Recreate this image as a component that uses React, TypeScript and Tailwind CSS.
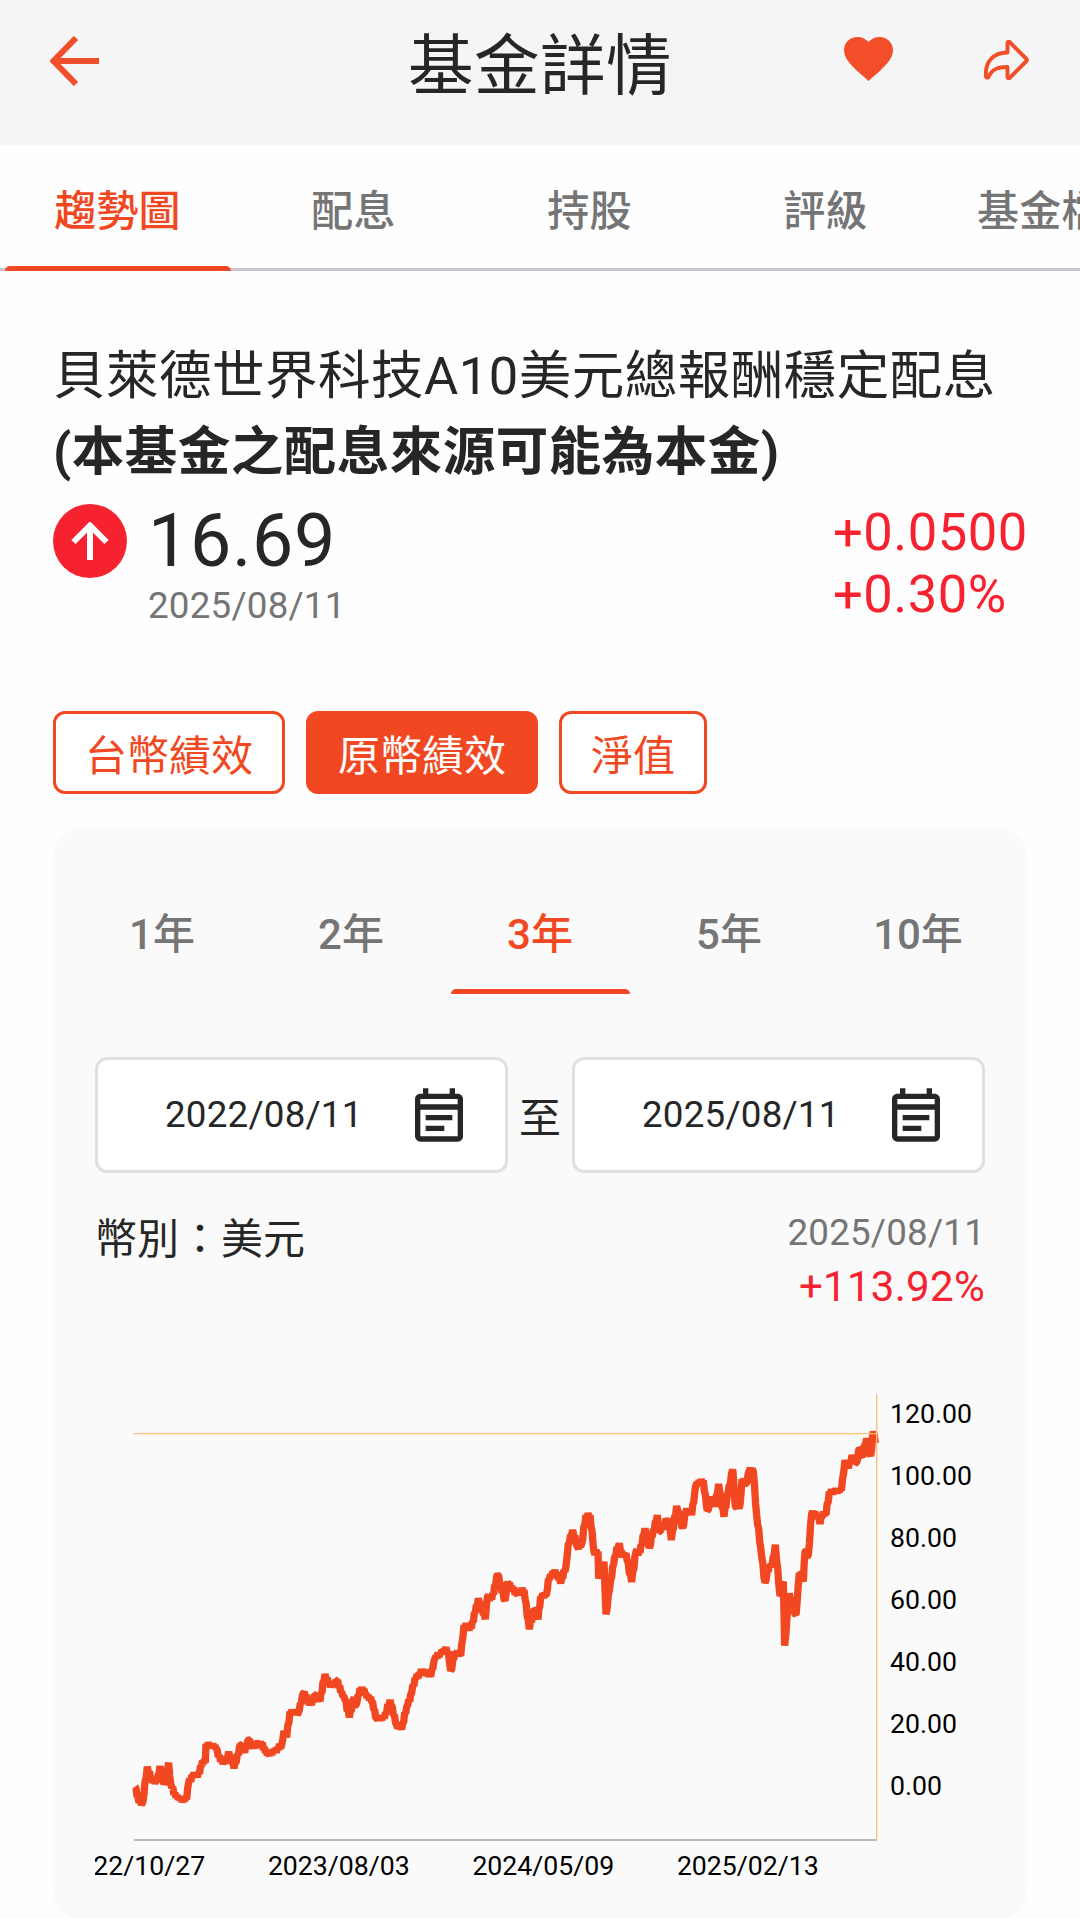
import { useState } from 'react'

const TABS = ['趨勢圖', '配息', '持股', '評級', '基金檔案']
const MODES = ['台幣績效', '原幣績效', '淨值']
const PERIODS = ['1年', '2年', '3年', '5年', '10年']

const Y_LABELS = ['120.00', '100.00', '80.00', '60.00', '40.00', '20.00', '0.00']
const X_LABELS = ['2022/10/27', '2023/08/03', '2024/05/09', '2025/02/13']

// x,y pairs in chart units (3 units per pixel)
const SERIES =
  '45,1220 57,1268 68,1268 82,1160 98,1208 112,1205 120,1158 132,1212 146,1148 152,1210 168,1252 175,1258 200,1258 206,1208 222,1178 232,1192 248,1142 256,1148 258,1092 272,1094 288,1105 302,1145 316,1150 326,1115 342,1165 362,1095 374,1118 386,1080 400,1105 412,1090 424,1092 442,1125 462,1115 485,1095 492,1052 500,1072 510,995 535,998 550,940 574,975 586,945 600,964 615,882 632,922 650,902 668,948 675,960 688,1012 700,958 708,975 720,925 738,940 755,965 770,1015 793,1015 810,960 830,1035 845,1048 860,980 875,940 885,895 910,870 932,890 945,835 960,820 ' +
  '975,810 985,815 992,872 1005,815 1022,828 1032,735 1054,745 1075,655 1096,718 1102,652 1115,658 1133,585 1155,662 1162,605 1188,640 1212,630 1228,748 1242,690 1254,718 1262,650 1280,640 1285,598 1305,570 1322,610 ' +
  '1338,558 1345,490 1358,450 1372,500 1385,492 1398,405 1410,405 1422,515 1434,515 1436,596 1452,545 1458,703 1472,600 1484,530 1498,490 1508,532 1518,520 1535,606 1548,515 1560,518 1575,445 1588,502 1612,405 1618,455 1645,415 1654,480 1670,378 1688,443 1700,385 1715,405 1728,315 ' +
  '1750,302 1762,392 1775,350 1785,380 1796,312 1812,410 1824,340 1838,268 1846,380 1860,375 1866,298 1878,310 1888,272 1900,275 1910,405 1922,502 1935,608 1948,555 1956,560 1966,494 1980,648 1990,605 1994,797 2008,640 2028,705 2038,580 2050,605 2055,515 2065,525 2075,402 2090,400 2100,432 2110,395 2118,405 2128,335 2164,332 2175,240 2185,265 2196,225 2210,248 2218,205 2228,228 2240,175 2252,228 2260,155 2266,190'

const WOBBLE = [7, -8, 4, -6, 9, -5, 6, -9]

// fill in daily points between the turning points
function toDaily(series: string) {
  const points = series.split(' ').map((pair) => pair.split(',').map(Number))
  const daily: string[] = []

  points.forEach(([x, y], i) => {
    daily.push(`${x},${y}`)
    const next = points[i + 1]
    if (!next) {
      return
    }
    const steps = Math.max(1, Math.round((next[0] - x) / 3.2))
    for (let s = 1; s < steps; s++) {
      const px = x + ((next[0] - x) * s) / steps
      const py = y + ((next[1] - y) * s) / steps + WOBBLE[daily.length % WOBBLE.length]
      daily.push(`${px.toFixed(1)},${py.toFixed(1)}`)
    }
  })

  return daily.join(' ')
}

const DAILY = toDaily(SERIES)

function BackIcon() {
  return (
    <svg viewBox="0 0 49 50" className="h-[50px] w-[49px]" fill="none" stroke="#f24e29" strokeWidth="6">
      <path d="M49 25H4M26 2 3.500 25 26 48" />
    </svg>
  )
}

function HeartIcon() {
  return (
    <svg viewBox="2 3 20 18.350" preserveAspectRatio="none" className="h-[44px] w-[49px]" fill="#f24e29">
      <path d="M12 21.350 10.550 20.030C5.400 15.360 2 12.280 2 8.500 2 5.420 4.420 3 7.500 3c1.740 0 3.410.81 4.500 2.090C13.090 3.810 14.760 3 16.500 3 19.580 3 22 5.420 22 8.500c0 3.780-3.400 6.860-8.550 11.540L12 21.350z" />
    </svg>
  )
}

function ShareIcon() {
  return (
    <svg
      viewBox="0 0 45 40"
      className="h-[40px] w-[45px]"
      fill="none"
      stroke="#f24e29"
      strokeWidth="3.900"
      strokeLinejoin="round"
    >
      <path d="M23.500 3.200c0-1.500 1.200-2 2.200-1L42.500 19 43 20l-.5 1L25.700 37.800c-1 1-2.200.5-2.200-1V27C14 27 8 29 4.800 36.600c-.7 1.700-2.800 1.300-2.900-.5C1 22 9 12.600 23.500 12.500z" />
    </svg>
  )
}

function UpIcon() {
  return (
    <div className="mt-1 flex size-[74px] items-center justify-center rounded-full bg-[#f7222f]">
      <svg viewBox="0 0 38 38" className="size-[38px]" fill="none" stroke="#fff" strokeWidth="6">
        <path d="M19 38V3M2.500 20 19 3.500 35.500 20" />
      </svg>
    </div>
  )
}

function CalendarIcon() {
  return (
    <svg viewBox="0 0 24 24" className="size-16" fill="#262626">
      <path d="M19 4h-1V2h-2v2H8V2H6v2H5c-1.110 0-1.990.9-1.990 2L3 20a2 2 0 0 0 2 2h14c1.100 0 2-.9 2-2V6c0-1.100-.9-2-2-2zm0 16H5V10h14v10zm0-12H5V6h14v2zm-2 6H7v-2h10v2zm-3 4H7v-2h7v2z" />
    </svg>
  )
}

function DateField({ value }: { value: string }) {
  return (
    <div className="flex h-[116px] w-[413px] items-center rounded-[12px] border-3 border-[#e0e0e0] bg-white pl-[67px]">
      <span className="w-[242px] text-[36.75px] tracking-[0.2px]">{value}</span>
      <CalendarIcon />
    </div>
  )
}

function TrendChart() {
  return (
    <svg viewBox="-75 0 2667 1614" className="mt-[62px] ml-[42px] h-[538px] w-[889px]">
      <polyline points={DAILY} fill="none" stroke="#f24822" strokeWidth="22" strokeLinejoin="bevel" />
      <path d="M42 1380H2270" stroke="#a3a3a3" strokeWidth="4" />
      <path d="M42 161H2270M2270 42V1380" fill="none" stroke="#fdbf77" strokeWidth="4" />
      <g fill="#000" fontSize="80">
        {Y_LABELS.map((label, i) => (
          <text key={label} x={2310} y={129 + i * 186.1}>
            {label}
          </text>
        ))}
        {X_LABELS.map((label, i) => (
          <text key={label} x={43 + i * 613.5} y={1484} textAnchor="middle">
            {label}
          </text>
        ))}
      </g>
    </svg>
  )
}

export default function App() {
  const [tab, setTab] = useState('趨勢圖')
  const [mode, setMode] = useState('原幣績效')
  const [period, setPeriod] = useState('3年')

  return (
    <div className="h-[1918px] w-[1080px] overflow-hidden bg-[#fefefe] font-['Roboto','Noto_Sans_CJK_TC',sans-serif] text-[#262626]">
      <header className="flex h-[145px] items-start bg-[#f5f5f5] pr-[50px] pl-[50px]">
        <div className="mt-[36px] w-[358px]">
          <BackIcon />
        </div>
        <h1 className="mt-[19px] w-[436px] text-[65.6px] leading-[96px] tracking-[0.4px] whitespace-nowrap">基金詳情</h1>
        <div className="mt-[37px] w-[140px]">
          <HeartIcon />
        </div>
        <div className="mt-[40px]">
          <ShareIcon />
        </div>
      </header>

      <nav className="flex h-[126px] border-b-3 border-[#cac4d0]">
        {TABS.map((item) => (
          <button
            key={item}
            type="button"
            onClick={() => setTab(item)}
            className={`relative h-[126px] w-[236px] shrink-0 pt-[7px] pr-[1px] text-[42px] font-medium tracking-[0.2px] whitespace-nowrap ${
              item === tab ? 'text-[#f24822]' : 'text-[#757575]'
            }`}
          >
            {item}
            {item === tab && (
              <span className="absolute bottom-0 left-[5px] h-[5px] w-[226px] rounded-t-[5px] bg-[#f24822]" />
            )}
          </button>
        ))}
      </nav>

      <main className="px-[53px] pt-[67px]">
        <h2 className="text-[52.5px] leading-[76px] tracking-[0.5px] whitespace-nowrap">
          貝萊德世界科技A10美元總報酬穩定配息
        </h2>
        <p className="text-[52.5px] leading-[76px] font-bold tracking-[0.5px] whitespace-nowrap">
          (本基金之配息來源可能為本金)
        </p>

        <div className="mt-[10px] flex h-[211px] items-start">
          <UpIcon />
          <div className="ml-[21px] flex-1">
            <p className="mt-px text-[73.5px] leading-[80px] tracking-[0.7px]">16.69</p>
            <p className="mt-[1px] text-[36.75px] leading-[48px] tracking-[0.2px] text-[#757575]">2025/08/11</p>
          </div>
          <div className="mt-px w-[194px] text-[52.5px] leading-[62px] tracking-[0.5px] whitespace-nowrap text-[#f7222f]">
            <p>+0.0500</p>
            <p>+0.30%</p>
          </div>
        </div>

        <div className="flex gap-[21px]">
          {MODES.map((item) => (
            <button
              key={item}
              type="button"
              onClick={() => setMode(item)}
              className={`h-[83px] rounded-[12px] border-3 border-[#f24822] px-[29px] pt-[7px] text-[42px] whitespace-nowrap ${
                item === mode ? 'bg-[#f24822] text-white' : 'bg-white text-[#f24822]'
              }`}
            >
              {item}
            </button>
          ))}
        </div>

        <section className="mt-[32px] h-[1096px] rounded-[32px] bg-[#fafafa] pt-[42px]">
          <div className="ml-[15px] flex">
            {PERIODS.map((item) => (
              <button
                key={item}
                type="button"
                onClick={() => setPeriod(item)}
                className={`relative h-[126px] w-[189px] pt-[7px] pr-[1px] text-[42px] font-medium ${
                  item === period ? 'text-[#f24822]' : 'text-[#757575]'
                }`}
              >
                {item}
                {item === period && (
                  <span className="absolute bottom-0 left-[5px] h-[5px] w-[179px] rounded-t-[5px] bg-[#f24822]" />
                )}
              </button>
            ))}
          </div>

          <div className="mt-[63px] ml-[42px] flex items-center">
            <DateField value="2022/08/11" />
            <span className="w-[64px] pt-[6px] text-center text-[42px]">至</span>
            <DateField value="2025/08/11" />
          </div>

          <div className="mt-[35px] mr-[42px] ml-[42px] flex h-[110px] justify-between">
            <p className="mt-[2px] text-[42px] leading-[60px]">幣別：美元</p>
            <div className="text-right">
              <p className="mt-px text-[36.75px] leading-[48px] tracking-[0.2px] text-[#757575]">2025/08/11</p>
              <p className="mt-[2px] text-[42px] leading-[56px] tracking-[0.3px] text-[#f7222f]">+113.92%</p>
            </div>
          </div>

          <TrendChart />
        </section>
      </main>
    </div>
  )
}
